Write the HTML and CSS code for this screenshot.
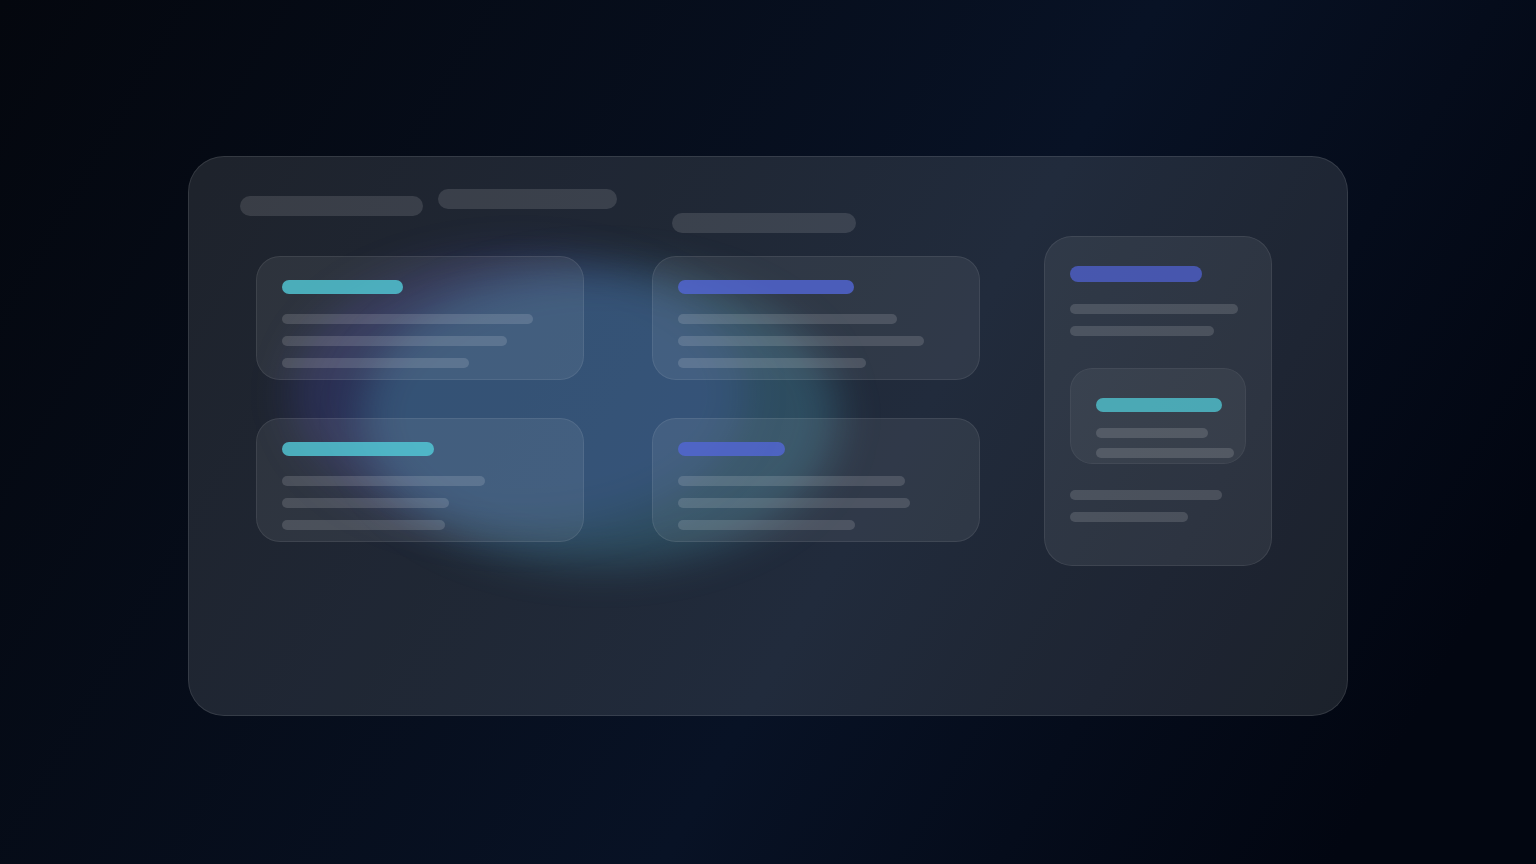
FILE: index.html
```html
<!DOCTYPE html>
<html lang="en">
<head>
<meta charset="utf-8">
<meta name="viewport" content="width=device-width, initial-scale=1">
<title>Dashboard</title>
<link rel="stylesheet" href="styles.css">
</head>
<body>
<main class="panel" aria-busy="true">
  <div class="glow glow-indigo"></div>
  <div class="glow glow-cyan"></div>
  <section class="content">
    <header class="tags">
      <div class="tag tag-first"></div>
      <div class="tag tag-second"></div>
      <div class="tag tag-third"></div>
    </header>
    <div class="cards">
      <article class="card">
        <div class="bar title cyan" style="width:121px"></div>
        <div class="bar" style="width:251px"></div>
        <div class="bar" style="width:225px"></div>
        <div class="bar" style="width:187px"></div>
      </article>
      <article class="card">
        <div class="bar title indigo" style="width:176px"></div>
        <div class="bar" style="width:219px"></div>
        <div class="bar" style="width:246px"></div>
        <div class="bar" style="width:188px"></div>
      </article>
      <article class="card">
        <div class="bar title cyan" style="width:152px"></div>
        <div class="bar" style="width:203px"></div>
        <div class="bar" style="width:167px"></div>
        <div class="bar" style="width:163px"></div>
      </article>
      <article class="card">
        <div class="bar title indigo" style="width:107px"></div>
        <div class="bar" style="width:227px"></div>
        <div class="bar" style="width:232px"></div>
        <div class="bar" style="width:177px"></div>
      </article>
    </div>
  </section>
  <aside class="side">
    <div class="bar heading" style="width:132px"></div>
    <div class="bar" style="width:168px"></div>
    <div class="bar" style="width:144px"></div>
    <div class="inset">
      <div class="bar title cyan" style="width:126px"></div>
      <div class="bar" style="width:112px"></div>
      <div class="bar" style="width:138px"></div>
    </div>
    <div class="bar" style="width:152px"></div>
    <div class="bar" style="width:118px"></div>
  </aside>
</main>
</body>
</html>
```
FILE: styles.css
```css
* {
  box-sizing: border-box;
}

body {
  margin: 0;
  min-height: 100vh;
  padding: 156px 188px 148px;
  display: flex;
  background: linear-gradient(120deg, #04070e 0%, #081225 57%, #020611 90%);
  font-family: Inter, "Liberation Sans", sans-serif;
}

.panel {
  position: relative;
  flex: 1;
  display: grid;
  grid-template-columns: 1fr 228px;
  column-gap: 64px;
  align-items: start;
  padding: 0 76px 48px 52px;
  border-radius: 36px;
  background: rgba(250, 252, 255, 0.105);
  box-shadow: inset 0 0 0 1px rgba(255, 255, 255, 0.1);
}

.glow {
  position: absolute;
  border-radius: 50%;
  filter: blur(20px);
}

.glow-indigo {
  left: 9%;
  top: 18%;
  width: 39%;
  height: 49%;
  background: rgba(92, 90, 225, 0.2);
}

.glow-cyan {
  left: 15%;
  top: 20%;
  width: 41%;
  height: 53%;
  background: rgba(80, 172, 205, 0.27);
}

.content,
.side {
  position: relative;
}

.tags {
  display: flex;
  align-items: flex-start;
  height: 100px;
  padding-top: 33px;
}

.tag {
  height: 20px;
  border-radius: 10px;
  background: rgba(255, 255, 255, 0.12);
}

.tag-first {
  width: 183px;
  margin-top: 7px;
}

.tag-second {
  width: 179px;
  margin-left: 15px;
}

.tag-third {
  width: 184px;
  margin: 24px 0 0 55px;
}

.cards {
  display: grid;
  grid-template-columns: 1fr 1fr;
  gap: 38px 68px;
  margin-left: 16px;
}

.card,
.side,
.inset {
  display: flex;
  flex-direction: column;
  gap: 12px;
}

.card {
  padding: 24px 26px 12px;
  border-radius: 24px;
  background: rgba(255, 250, 250, 0.07);
  box-shadow: inset 0 0 0 1px rgba(255, 255, 255, 0.08);
}

.side {
  margin-top: 80px;
  padding: 30px 26px 44px;
  border-radius: 28px;
  background: rgba(255, 250, 250, 0.07);
  box-shadow: inset 0 0 0 1px rgba(255, 255, 255, 0.08);
}

.inset {
  gap: 10px;
  margin: 20px 0 14px;
  padding: 30px 12px 6px 26px;
  border-radius: 22px;
  background: rgba(255, 255, 255, 0.05);
  box-shadow: inset 0 0 0 1px rgba(255, 255, 255, 0.05);
}

.bar {
  height: 10px;
  max-width: 100%;
  border-radius: 5px;
  background: rgba(255, 255, 255, 0.14);
}

.title {
  height: 14px;
  margin-bottom: 8px;
  border-radius: 7px;
}

.inset .title {
  margin-bottom: 6px;
}

.heading {
  height: 16px;
  margin-bottom: 10px;
  border-radius: 8px;
  background: rgba(80, 98, 210, 0.75);
}

.cyan {
  background: rgba(82, 204, 218, 0.8);
}

.indigo {
  background: rgba(83, 102, 215, 0.8);
}

.inset .cyan {
  background: rgba(82, 204, 216, 0.75);
}
```
